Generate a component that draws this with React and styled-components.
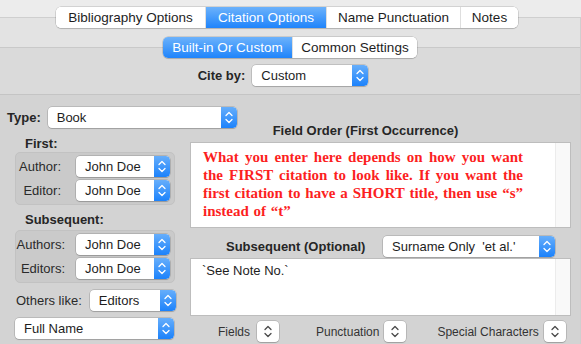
import React from "react";
import styled, { createGlobalStyle } from "styled-components";

const Global = createGlobalStyle`
  html, body { margin: 0; padding: 0; background: #ececec; }
  body {
    font-family: "Liberation Sans", Arial, sans-serif;
    font-size: 13px;
    color: #232323;
    -webkit-font-smoothing: antialiased;
  }
  * { box-sizing: border-box; }
`;

const Window = styled.div`
  width: 581px;
  height: 344px;
  overflow: hidden;
  background: #ececec;
  display: flex;
  flex-direction: column;
  padding-top: 7px;
`;

const SegRow = styled.div`
  position: relative;
  z-index: 2;
  display: flex;
  justify-content: center;
  padding-right: ${(p) => p.$shift || 0}px;
`;

const Segmented = styled.div`
  display: flex;
  height: 21px;
  border-radius: 5px;
  overflow: hidden;
  background: #fff;
  box-shadow: 0 0 0 0.5px rgba(0, 0, 0, 0.22), 0 1px 1px rgba(0, 0, 0, 0.12);
`;

const Segment = styled.div`
  width: ${(p) => p.$w}px;
  display: flex;
  align-items: center;
  justify-content: center;
  white-space: nowrap;
  font-size: 13.5px;
  color: ${(p) => (p.$active ? "#fff" : "#1d1d1d")};
  background: ${(p) =>
    p.$active ? "linear-gradient(#6cb2fb, #1f84fb)" : "#fff"};
  & + & {
    border-left: 1px solid ${(p) => (p.$active ? "transparent" : "#dedede")};
  }
`;

const Panel = styled.div`
  position: relative;
  z-index: 1;
  flex: 1;
  display: flex;
  flex-direction: column;
  margin-top: ${(p) => p.$pull}px;
  padding-top: ${(p) => p.$pad}px;
  background: ${(p) => p.$bg};
  border-top: 1px solid ${(p) => p.$line};
  border-right: ${(p) => (p.$edge ? "1px solid #cfcfcf" : "none")};
`;

const CiteRow = styled.div`
  display: flex;
  align-items: center;
  justify-content: center;
  gap: 7px;
  padding-right: 14px;
  margin-bottom: 8px;
`;

const Bold = styled.span`
  font-weight: 700;
  font-size: 13px;
  color: #262626;
  white-space: nowrap;
`;

const Label = styled.span`
  font-size: 13px;
  color: #2a2a2a;
  white-space: nowrap;
`;

const PopupBox = styled.div`
  display: flex;
  align-items: center;
  width: ${(p) => p.$w}px;
  height: 21px;
  flex-shrink: 0;
  background: #fff;
  border-radius: 4px;
  box-shadow: 0 0 0 0.5px rgba(0, 0, 0, 0.24), 0 1px 1px rgba(0, 0, 0, 0.14);
  padding-left: 9px;
  font-size: 13px;
  color: #1d1d1d;
  white-space: nowrap;
  overflow: hidden;
`;

const PopupText = styled.span`
  flex: 1;
  white-space: pre;
`;

const Arrow = styled.div`
  width: 16px;
  height: 100%;
  display: flex;
  align-items: center;
  justify-content: center;
  background: linear-gradient(#66aefb, #1c82fb);
  border-radius: 0 4px 4px 0;
`;

const Chevrons = ({ color = "#fff", w = 16 }) => (
  <svg width={w} height="21" viewBox={`0 0 ${w} 21`}>
    <path
      d={`M${w / 2 - 3} 8.5 L${w / 2} 5.5 L${w / 2 + 3} 8.5 M${w / 2 - 3} 12.5 L${w / 2} 15.5 L${w / 2 + 3} 12.5`}
      fill="none"
      stroke={color}
      strokeWidth="1.3"
      strokeLinecap="round"
      strokeLinejoin="round"
    />
  </svg>
);

const Popup = ({ w, children }) => (
  <PopupBox $w={w}>
    <PopupText>{children}</PopupText>
    <Arrow>
      <Chevrons />
    </Arrow>
  </PopupBox>
);

const Stepper = styled.div`
  width: 22px;
  height: 21px;
  flex-shrink: 0;
  background: #fff;
  border-radius: 4px;
  box-shadow: 0 0 0 0.5px rgba(0, 0, 0, 0.24), 0 1px 1px rgba(0, 0, 0, 0.14);
  display: flex;
  align-items: center;
  justify-content: center;
`;

const Main = styled.div`
  flex: 1;
  display: flex;
  flex-direction: column;
  padding-left: 7px;
`;

const TypeRow = styled.div`
  display: flex;
  align-items: center;
  gap: 7px;
  margin-top: 12px;
`;

const Body = styled.div`
  display: grid;
  grid-template-columns: 183px 381px;
  align-items: start;
`;

const LeftCol = styled.div`
  display: flex;
  flex-direction: column;
`;

const GroupTitle = styled(Bold)`
  display: block;
  line-height: 15px;
  margin: ${(p) => p.$top}px 0 ${(p) => p.$bottom}px 18px;
`;

const GroupBox = styled.div`
  width: 160px;
  margin-left: 8px;
  padding: 3px 4px 3px 0;
  background: #cacaca;
  border: 1px solid #c2c2c2;
  border-radius: 5px;
  display: grid;
  grid-template-columns: 1fr 94px;
  column-gap: ${(p) => p.$gap}px;
  row-gap: 3px;
  align-items: center;
`;

const RightLabel = styled(Label)`
  text-align: right;
`;

const OthersRow = styled.div`
  display: flex;
  align-items: center;
  gap: 8px;
  margin: 7px 0 0 9px;
`;

const FullRow = styled.div`
  margin: 7px 0 0 8px;
`;

const RightCol = styled.div`
  display: flex;
  flex-direction: column;
`;

const FieldTitle = styled(Bold)`
  display: block;
  text-align: center;
  line-height: 14px;
  margin: -4px 30px 4px 0;
`;

const TextBox = styled.div`
  display: flex;
  height: ${(p) => p.$h}px;
  background: #fff;
  border: 1px solid #bdbdbd;
`;

const TextArea = styled.div`
  flex: 1;
  padding: ${(p) => p.$pad};
`;

const Track = styled.div`
  width: 15px;
  background: #f9f9f9;
  border-left: 1px solid #ececec;
`;

const RedNote = styled.p`
  margin: 0;
  width: 320px;
  font-family: "Liberation Serif", "Times New Roman", serif;
  font-weight: 700;
  font-size: 15px;
  line-height: 18px;
  color: #fc1f1f;
  text-align: justify;
  word-spacing: 1px;
`;

const PlainText = styled.span`
  font-size: 13px;
  color: #1d1d1d;
`;

const SubRow = styled.div`
  display: flex;
  align-items: center;
  margin: 8px 0 1px;
  padding: 0 16px 0 36px;
  justify-content: space-between;
`;

const BottomRow = styled.div`
  display: flex;
  align-items: center;
  margin-top: 5px;
  padding-left: 28px;
`;

const ToolGroup = styled.div`
  display: flex;
  align-items: center;
  gap: ${(p) => p.$gap || 5}px;
  margin-left: ${(p) => p.$ml || 0}px;
`;

const SmallLabel = styled(Label)`
  font-size: 12px;
  color: #333;
`;

export default function App() {
  return (
    <Window>
      <Global />
      <SegRow $shift={7}>
        <Segmented>
          <Segment $w={149}>Bibliography Options</Segment>
          <Segment $w={121} $active>
            Citation Options
          </Segment>
          <Segment $w={134}>Name Punctuation</Segment>
          <Segment $w={58}>Notes</Segment>
        </Segmented>
      </SegRow>
      <Panel $pull={-11} $pad={19} $bg="#e3e3e3" $line="#cfcfcf" $edge>
        <SegRow $shift={0}>
          <Segmented>
            <Segment $w={129} $active>
              Built-in Or Custom
            </Segment>
            <Segment $w={125}>Common Settings</Segment>
          </Segmented>
        </SegRow>
        <Panel $pull={-11} $pad={17} $bg="#dadada" $line="#c9c9c9">
          <CiteRow>
            <Bold>Cite by:</Bold>
            <Popup w={116}>Custom</Popup>
          </CiteRow>
          <Panel $pull={0} $pad={0} $bg="#d3d3d3" $line="#c4c4c4">
            <Main>
              <TypeRow>
                <Bold>Type:</Bold>
                <Popup w={189}>Book</Popup>
              </TypeRow>
              <Body>
                <LeftCol>
                  <GroupTitle $top={8} $bottom={1}>
                    First:
                  </GroupTitle>
                  <GroupBox $gap={15}>
                    <RightLabel>Author:</RightLabel>
                    <Popup w={94}>John Doe</Popup>
                    <RightLabel>Editor:</RightLabel>
                    <Popup w={94}>John Doe</Popup>
                  </GroupBox>
                  <GroupTitle $top={7} $bottom={3}>
                    Subsequent:
                  </GroupTitle>
                  <GroupBox $gap={11}>
                    <RightLabel>Authors:</RightLabel>
                    <Popup w={94}>John Doe</Popup>
                    <RightLabel>Editors:</RightLabel>
                    <Popup w={94}>John Doe</Popup>
                  </GroupBox>
                  <OthersRow>
                    <Label>Others like:</Label>
                    <Popup w={86}>Editors</Popup>
                  </OthersRow>
                  <FullRow>
                    <Popup w={159}>Full Name</Popup>
                  </FullRow>
                </LeftCol>
                <RightCol>
                  <FieldTitle>Field Order (First Occurrence)</FieldTitle>
                  <TextBox $h={86}>
                    <TextArea $pad="5px 0 0 12px">
                      <RedNote>
                        What you enter here depends on how you want the FIRST
                        citation to look like. If you want the first citation
                        to have a SHORT title, then use “s” instead of “t”
                      </RedNote>
                    </TextArea>
                    <Track />
                  </TextBox>
                  <SubRow>
                    <Bold>Subsequent (Optional)</Bold>
                    <Popup w={172}>{"Surname Only  'et al.'"}</Popup>
                  </SubRow>
                  <TextBox $h={58}>
                    <TextArea $pad="4px 0 0 11px">
                      <PlainText>`See Note No.`</PlainText>
                    </TextArea>
                    <Track />
                  </TextBox>
                  <BottomRow>
                    <ToolGroup $gap={7}>
                      <SmallLabel>Fields</SmallLabel>
                      <Stepper>
                        <Chevrons color="#4a4a4a" w={22} />
                      </Stepper>
                    </ToolGroup>
                    <ToolGroup $ml={37}>
                      <SmallLabel>Punctuation</SmallLabel>
                      <Stepper>
                        <Chevrons color="#4a4a4a" w={22} />
                      </Stepper>
                    </ToolGroup>
                    <ToolGroup $ml={31}>
                      <SmallLabel>Special Characters</SmallLabel>
                      <Stepper>
                        <Chevrons color="#4a4a4a" w={22} />
                      </Stepper>
                    </ToolGroup>
                  </BottomRow>
                </RightCol>
              </Body>
            </Main>
          </Panel>
        </Panel>
      </Panel>
    </Window>
  );
}
